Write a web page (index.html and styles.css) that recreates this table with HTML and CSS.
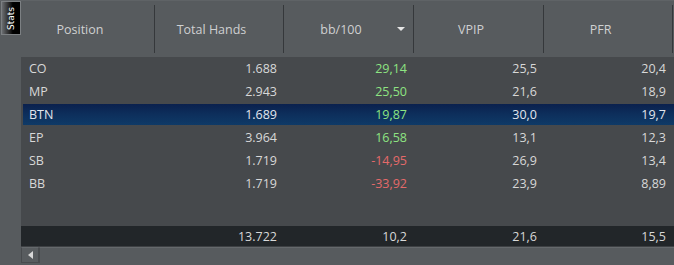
FILE: index.html
```html
<!DOCTYPE html>
<html>
<head>
<meta charset="utf-8">
<link rel="stylesheet" href="styles.css">
</head>
<body>
<div class="app">
  <div class="side">
    <div class="tab"><span class="tab-label">Stats</span></div>
  </div>
  <div class="main">
    <div class="header cols">
      <div class="hcell"><span>Position</span></div>
      <div class="hcell"><span>Total Hands</span></div>
      <div class="hcell sorted"><span>bb/100</span><i class="caret"></i></div>
      <div class="hcell"><span>VPIP</span></div>
      <div class="hcell"><span>PFR</span></div>
    </div>
    <div class="body">
      <div class="row cols"><div class="c l">CO</div><div class="c">1.688</div><div class="c pos">29,14</div><div class="c">25,5</div><div class="c">20,4</div></div>
      <div class="row cols"><div class="c l">MP</div><div class="c">2.943</div><div class="c pos">25,50</div><div class="c">21,6</div><div class="c">18,9</div></div>
      <div class="row cols sel"><div class="c l">BTN</div><div class="c">1.689</div><div class="c pos">19,87</div><div class="c">30,0</div><div class="c">19,7</div></div>
      <div class="row cols"><div class="c l">EP</div><div class="c">3.964</div><div class="c pos">16,58</div><div class="c">13,1</div><div class="c">12,3</div></div>
      <div class="row cols"><div class="c l">SB</div><div class="c">1.719</div><div class="c neg">-14,95</div><div class="c">26,9</div><div class="c">13,4</div></div>
      <div class="row cols"><div class="c l">BB</div><div class="c">1.719</div><div class="c neg">-33,92</div><div class="c">23,9</div><div class="c">8,89</div></div>
    </div>
    <div class="footer cols">
      <div class="c l"></div><div class="c">13.722</div><div class="c">10,2</div><div class="c">21,6</div><div class="c">15,5</div>
    </div>
    <div class="scroll">
      <div class="sbtn"><i class="larrow"></i></div>
      <div class="track"></div>
    </div>
  </div>
</div>
</body>
</html>
```
FILE: styles.css
```css
* { box-sizing: border-box; }
html, body { margin: 0; padding: 0; }
body {
  background: #575b5e;
  font-family: "Open Sans", "Noto Sans", sans-serif;
  font-size: 12px;
  color: #d4d4d4;
}
.app {
  width: 674px;
  height: 265px;
  display: flex;
  background: #575b5e;
  border-top: 1px solid #5f6366;
}
.side {
  width: 21px;
  flex: none;
  padding: 0 0 0 1px;
}
.tab {
  width: 20px;
  height: 34px;
  border: 1px solid #7c8083;
  background: linear-gradient(to right, #6a6d70 0%, #1e1e1e 45%, #000 60%, #000 100%);
  display: flex;
  align-items: center;
  justify-content: center;
}
.tab-label {
  writing-mode: vertical-rl;
  transform: rotate(180deg);
  color: #ffffff;
  font-family: "DejaVu Sans", sans-serif;
  font-size: 9px;
  line-height: 10px;
}
.main {
  width: 653px;
  display: flex;
  flex-direction: column;
}
.cols {
  display: grid;
  grid-template-columns: 134px 129px 130px 130px 129px 1px;
}
.header {
  height: 56px;
  align-items: center;
}
.hcell {
  height: 48px;
  border-right: 1px solid #35383b;
  display: flex;
  align-items: center;
  justify-content: center;
  padding-right: 15px;
  color: #cfd0d1;
  font-size: 12.5px;
  position: relative;
}
.caret {
  position: absolute;
  right: 8px;
  top: 22px;
  width: 0;
  height: 0;
  border-left: 4px solid transparent;
  border-right: 4px solid transparent;
  border-top: 4px solid #e6e6e6;
}
.body {
  height: 169px;
  background: #46494c;
  padding-left: 2px;
}
.row {
  height: 23px;
  grid-template-columns: 132px 129px 130px 130px 129px 1px;
}
.c {
  display: flex;
  align-items: center;
  justify-content: flex-end;
  padding-right: 7px;
  font-size: 12.5px;
  color: #d8d8d8;
}
.c.l {
  justify-content: flex-start;
  padding-left: 6px;
}
.pos { color: #8ee482; }
.neg { color: #e46a6a; }
.sel {
  background: linear-gradient(to bottom, #0a1f4c 0%, #0d2f5c 50%, #0f3b68 100%);
  background-clip: content-box;
  padding: 1px 0;
}
.sel .c { color: #e2e6ee; }
.sel .pos { color: #8ee482; }
.footer {
  height: 21px;
  background: #222629;
  border-bottom: 1px solid #3d4043;
}
.footer .c { color: #d8d8d8; }
.scroll {
  height: 17px;
  display: flex;
  background: #575b5e;
}
.sbtn {
  width: 18px;
  height: 16px;
  border: 1px solid #484b4e;
  border-top-color: #65696c;
  background: #585c5f;
  display: flex;
  align-items: center;
  justify-content: center;
}
.larrow {
  width: 0;
  height: 0;
  border-top: 4px solid transparent;
  border-bottom: 4px solid transparent;
  border-right: 5px solid #d8d8d8;
}
.track {
  flex: 1;
  height: 16px;
  border-top: 1px solid #65696c;
  border-left: 1px solid #484b4e;
}
```
